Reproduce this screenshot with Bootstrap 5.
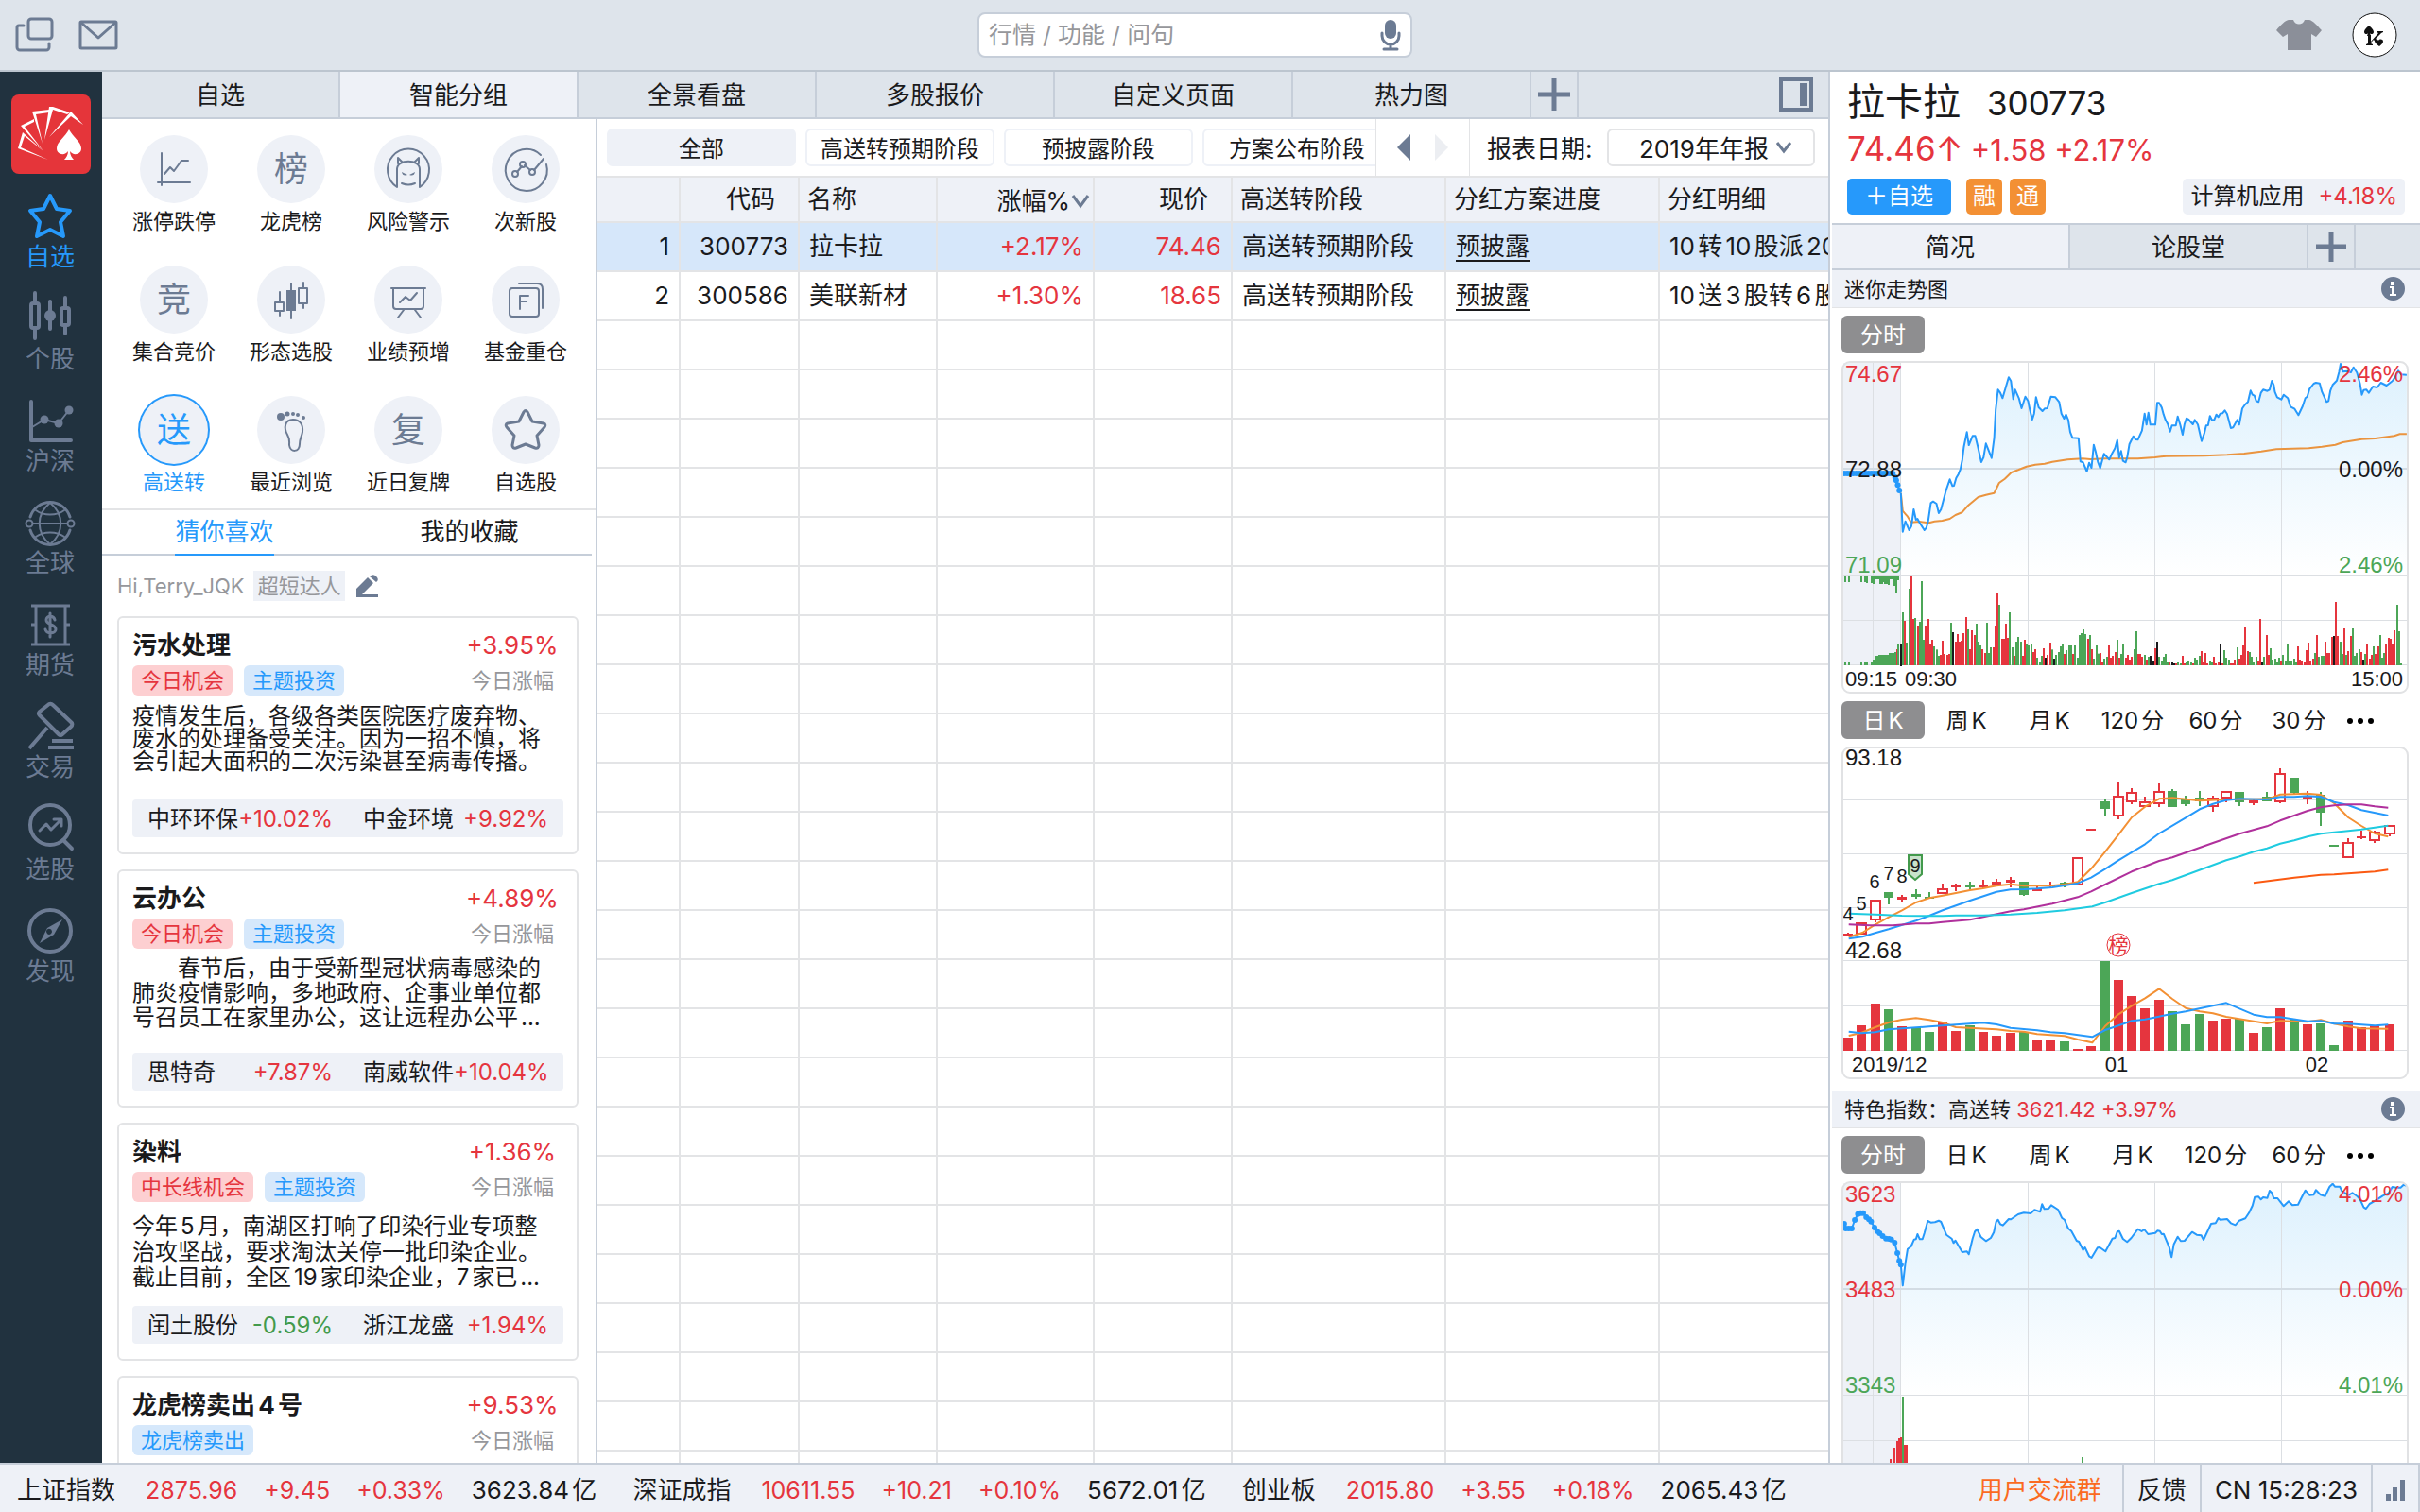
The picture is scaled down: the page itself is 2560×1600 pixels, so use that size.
<!DOCTYPE html>
<html lang="zh-CN">
<head>
<meta charset="utf-8">
<meta name="viewport" content="width=device-width, initial-scale=1">
<title>智能分组</title>
<link href="https://cdn.jsdelivr.net/npm/bootstrap@5.3.0/dist/css/bootstrap.min.css" rel="stylesheet">
<style>
:root{--line:#c6ced9;--soft:#e3e4e6;--bar:#dee4eb;--pale:#eef1f7;--slate:#6c7b93;--navy:#21323f;--blue:#2699fb;--up:#e5353e;--down:#439a4c;--ink:#1a1a1c;--mute:#96979b}
body{font-family:Inter,"Noto Sans CJK SC",sans-serif;color:var(--ink);font-size:26px;line-height:32px;text-autospace:normal;background:#fff}
button,input,select{font-family:inherit;color:inherit;text-autospace:inherit}
button{border:0;background:none;padding:0}
a{color:inherit;text-decoration:none}
svg{display:block}
.up{color:var(--up)}.down{color:var(--down)}.blue{color:var(--blue)}.mute{color:var(--mute)}.slate{color:var(--slate)}
.snug{text-autospace:no-autospace}
.ico{fill:none;stroke:currentColor;stroke-width:2;stroke-linecap:round;stroke-linejoin:round}
.ico.bold{stroke-width:3}
.ico .solid{fill:currentColor;stroke:none}

.topbar{height:76px;background:var(--bar);border-bottom:2px solid #bcc5cf;display:grid;grid-template-columns:calc(50% - 246px) 460px 1fr;align-items:center}
.searchbox{height:48px;background:#fff;border:2px solid var(--line);border-radius:8px;padding:0 10px}
.searchbox input{border:0;outline:0;background:none;font-size:25px;line-height:32px;padding:0}
.searchbox input::placeholder{color:var(--mute);opacity:1}

.rail{width:108px;background:var(--navy);padding-top:24px}
.rail .logo{width:84px;height:84px;margin:0 auto 16px}
.rail a{display:flex;flex-direction:column;align-items:center;height:108px;padding-right:2px;color:var(--slate)}
.rail a.active{color:var(--blue)}

.tabstrip{height:50px;background:var(--bar);border-bottom:2px solid var(--line)}
.tabstrip button{width:252px;border-right:2px solid var(--line);height:48px;padding-top:2px}
.tabstrip button.active{background:var(--pale)}
.tabstrip button.plus{width:50px;padding:0}

.leftpane{width:524px;border-right:2px solid var(--line)}
.groups{display:grid;grid-template-columns:repeat(4,124px);justify-content:center;padding:17px 0 0 2px;height:414px;border-bottom:2px solid var(--soft)}
.groups button{height:138px;font-size:22px;display:flex;flex-direction:column;align-items:center}
.groups .disc{width:72px;height:72px;border-radius:50%;background:var(--pale);color:var(--slate);font-size:36px;display:flex;align-items:center;justify-content:center;margin-bottom:3px}
.groups .active{color:var(--blue)}
.groups .active .disc{color:var(--blue);box-shadow:0 0 0 2px var(--blue)}
.subtabs{height:48px;border-bottom:2px solid var(--line)}
.subtabs button{height:48px;border-bottom:2px solid transparent}
.subtabs .active{color:var(--blue);border-color:var(--blue)}
.greet{font-size:22px;padding:16px}
.greet .persona{background:var(--pale);padding:0 4px 0 5px;margin:0 12px 0 9px}
.theme{border:2px solid var(--soft);border-radius:6px;height:252px;padding:13px 14px 0;margin:0 18px 16px 16px}
.theme h2{font-size:26px;line-height:32px;font-weight:700;margin:0}
.theme .pct{width:108px;text-align:center}
.theme .tagrow{font-size:22px;margin-top:5px}
.tag{border-radius:6px;padding:0 9px;margin-right:12px}
.tag-red{background:#fdcfd1;color:var(--up)}
.tag-blue{background:#d6e8fb;color:var(--blue)}
.theme p{font-size:24px;line-height:26px;height:110px;padding:8px 8px 0 0;margin:0}
.theme p.tight{line-height:24px;padding-top:10px}
.theme p.airy{line-height:27px;padding-top:12px}
.pair{background:var(--pale);border-radius:4px;height:40px;font-size:24px}
.pair>div{width:50%;padding:2px 16px 0;display:flex;justify-content:space-between;align-items:center;white-space:nowrap}

.filters{height:62px;border-bottom:2px solid var(--soft)}
.pills{padding-left:10px;gap:10px}
.pills button{flex:0 0 200px;height:40px;border:2px solid var(--pale);border-radius:6px;font-size:24px;white-space:nowrap;padding-top:4px}
.pills .active{background:var(--pale)}
.pager{width:100px;border:1px solid var(--soft);border-width:0 1px;gap:26px}
.period{width:379px;padding:0 14px 0 18px}
.period label{padding-top:4px}
.period select{width:220px;height:40px;border:2px solid var(--soft);border-radius:6px;font-size:26px;line-height:32px;padding:4px 0 0 32px;background-color:#fff;background-position:right 22px center;background-size:18px 14px;color:var(--ink);background-image:url("data:image/svg+xml,%3csvg xmlns='http://www.w3.org/2000/svg' viewBox='0 0 18 14'%3e%3cpath fill='none' stroke='%236c7b93' stroke-width='3' d='M2 2l7 9 7-9'/%3e%3c/svg%3e")}
.quotes{table-layout:fixed;border-collapse:separate;border-spacing:0;margin:0;color:var(--ink)}
.quotes>:not(caption)>*>*{height:52px;padding:0 10px;border:0;border-right:2px solid var(--soft);border-bottom:2px solid var(--soft);white-space:nowrap;overflow:hidden;vertical-align:middle;background:transparent;color:inherit;box-shadow:none}
.quotes>thead>tr>th{height:48px;background:var(--pale);font-weight:400;padding:0 8px}
.quotes>*>tr>:last-child{border-right:0}
.quotes>tbody>tr>.n{text-align:right}
.quotes>thead>tr>.n{text-align:right;padding-right:24px}
.quotes>thead>tr>.sorted{padding-right:2px}
.quotes>tbody>tr.picked>td{background:#d6e7fa}
.quotes>tbody>tr>.up{color:var(--up)}
.quotes a{text-decoration:underline;text-underline-offset:5px;text-decoration-thickness:2px}

.sidepane{width:626px;border-left:2px solid var(--line);padding-left:2px}
.head{height:160px;padding:10px 16px 0}
.head .nm{font-size:40px;line-height:44px;margin-right:28px}
.head .cd,.head .px{font-size:35px;line-height:44px}
.head .chg{font-size:31px;line-height:44px}
.btn-add{background:var(--blue);color:#fff;width:110px;height:38px;border-radius:5px;font-size:24px}
.mk{background:#f39034;color:#fff;width:38px;height:38px;border-radius:5px;font-size:24px;display:flex;align-items:center;justify-content:center}
.sector{background:var(--pale);height:38px;border-radius:5px;font-size:24px;padding:0 8px;gap:15px}
.sidepane .tabstrip{border-top:2px solid var(--line)}
.sidepane .tabstrip button{height:46px}
.sect{background:var(--pale);height:40px;font-size:22px;border-bottom:1px solid var(--soft);padding:0 16px 0 13px}
.plot+.sect{margin-top:12px}
.spans{padding:8px 0 8px 10px;font-size:24px}
.spans button{width:88px;height:40px;border-radius:6px;white-space:nowrap;padding-top:2px}
.spans .active{background:#8e8e90;color:#fff}
.spans .more{width:42px}
.plot{padding:0 12px 0 10px}
.plot svg{width:100%;height:auto}
.plot text{font-family:"Liberation Sans",sans-serif;font-size:24px}
.plot .sm{font-size:22px}
.plot .seq{font-size:20px}
.plot .han{font-family:"Noto Sans CJK SC",sans-serif;font-size:21px}

.foot{height:52px;background:var(--pale);border-top:2px solid var(--line);white-space:nowrap}
.foot .idx{gap:28px;margin-left:18px;padding-top:4px}
.foot .idx+.idx{margin-left:38px}
.foot .idx .up{font-size:25px}
.foot .cell{height:50px;display:flex;align-items:center;border-right:2px solid var(--line);padding:4px 14px 0}
</style>
<script src="https://cdn.jsdelivr.net/npm/bootstrap@5.3.0/dist/js/bootstrap.bundle.min.js"></script>
</head>
<body class="vh-100 d-flex flex-column overflow-hidden">

<header class="topbar flex-shrink-0">
  <div class="d-flex align-items-center slate ps-3">
    <button aria-label="窗口"><svg class="ico bold" width="42" height="40" viewBox="0 0 42 40"><rect x="14" y="3" width="25" height="21" rx="3"/><path d="M9 10H4a2 2 0 0 0-2 2v21a3 3 0 0 0 3 3h28a3 3 0 0 0 3-3v-4"/></svg></button>
    <button class="ms-4" aria-label="邮件"><svg class="ico bold" width="44" height="36" viewBox="0 0 44 36"><rect x="3" y="4" width="38" height="28" rx="1"/><path d="M4 5l18 16L40 5"/></svg></button>
  </div>
  <div class="searchbox d-flex align-items-center">
    <input class="flex-grow-1" type="text" placeholder="行情 / 功能 / 问句" aria-label="搜索">
    <button class="slate" aria-label="语音"><svg class="ico" width="22" height="34" viewBox="0 0 22 34"><rect class="solid" x="5" y="1" width="12" height="20" rx="6"/><path d="M2 15v3a9 9 0 0 0 18 0v-3M11 27v4M4 32h14" stroke-width="3"/></svg></button>
  </div>
  <div class="d-flex align-items-center justify-content-end pe-4">
    <button class="me-4" style="color:#8b8f99" aria-label="换肤"><svg width="48" height="34" viewBox="0 0 48 34"><path fill="currentColor" d="M13 1h5c2 6 10 6 12 0h5c4 1 8 6 13 11l-6 7-5-3v17H12V16l-5 3-7-7C5 6 9 2 13 1z"/></svg></button>
    <button class="ms-2" aria-label="用户"><svg width="48" height="48" viewBox="0 0 48 48"><circle cx="24" cy="24" r="23" fill="#fff" stroke="#111"/><g fill="#111"><path d="M18 14c2 2 5 4 5 7 0 2-3 3-4 1l1 3h-4l1-3c-1 2-4 1-4-1 0-3 3-5 5-7z"/><path d="M17 24h3v7l8-9-2-1v-1h7v1l-2 1-6 6 4 5h-3l-3-4-3 3v1l2 1v1h-7v-1l2-1z"/><path d="M29 36c-3-2-5-4-5-6 0-2 3-2 4 0 1-2 5-2 5 1 0 2-2 3-4 5z"/></g></svg></button>
  </div>
</header>

<div class="d-flex flex-grow-1 overflow-hidden">
  <nav class="rail flex-shrink-0">
    <svg class="logo" viewBox="0 0 84 84"><rect width="84" height="84" rx="8" fill="#e5353a"/><g fill="#fff"><path d="M39 69L7 57l5-17 22 20-20-16-4 12z"/><path d="M34 60L10 33l14-7v3l-10 5z"/><path d="M33 52L22 18l18-2v3l-14 2z"/><path d="M35 48l5-35 4 0 18 6-3 2-15-5z"/><path d="M40 45l23-27 13 14-13-9z"/><path d="M61 37c4 8 13 13 13 20 0 7-9 8-12 3 0 4 2 7 4 9H56c2-2 4-5 4-9-3 5-12 4-12-3 0-7 9-12 13-20z"/></g></svg>
    <a class="active" href="#"><svg class="ico" width="54" height="56" viewBox="0 0 54 56"><path stroke-width="4" stroke-linejoin="round" d="M27 7l7 14 14 2-10 12 3 15-14-7-14 7 3-15L6 23l14-2z"/></svg>自选</a>
    <a href="#"><svg class="ico" width="54" height="56" viewBox="0 0 54 56" ><g stroke-width="4"><rect x="7" y="13" width="8" height="26" rx="2"/><path d="M11 2v11M11 39v11M27 11v29M43 7v11M43 36v9"/><rect x="39" y="18" width="8" height="18" rx="2"/></g><circle class="solid" cx="27" cy="26" r="6"/></svg>个股</a>
    <a href="#"><svg class="ico" width="54" height="56" viewBox="0 0 54 56"><path stroke-width="4" d="M7 9v41h42"/><path d="M8 36l13-8 15 4 11-14"/><circle class="solid" cx="21" cy="28" r="4.500"/><circle class="solid" cx="36" cy="32" r="4.500"/><circle class="solid" cx="47" cy="18" r="4.500"/></svg>沪深</a>
    <a href="#"><svg class="ico" width="54" height="56" viewBox="0 0 54 56"><path stroke-width="3" d="M6 23a22 22 0 0 1 42 0M6 37a22 22 0 0 0 42 0"/><path d="M9 30h36M27 8c-15 12-15 32 0 44M27 8c15 12 15 32 0 44M12 16c8 6 22 6 30 0M12 44c8-6 22-6 30 0"/><circle cx="5" cy="30" r="3.500"/><circle cx="49" cy="30" r="3.500"/></svg>全球</a>
    <a href="#"><svg class="ico" width="54" height="56" viewBox="0 0 54 56"><path stroke-width="3" stroke-linecap="butt" d="M7 9h41M7 50h41M12 9v41M43 9v41M7 29h5M43 29h5"/><path stroke-width="3" d="M32 24c-1-5-9-5-9 0 0 6 10 4 10 10 0 5-10 5-11 0M27 17v25"/></svg>期货</a>
    <a href="#"><svg class="ico" width="54" height="56" viewBox="0 0 54 56"><path stroke-width="4" stroke-linecap="butt" d="M26 5q2-1 4 1l20 19q1 2-1 4l-9 8q-2 2-4 0L16 17q-2-2 0-4zM24 30L5 52M29 44h22M25 51h27"/></svg>交易</a>
    <a href="#"><svg class="ico" width="54" height="56" viewBox="0 0 54 56"><circle cx="27" cy="25" r="21" stroke-width="4"/><path stroke-width="4" d="M41 41l9 9"/><path stroke-width="3" d="M16 31l7-7 5 6 10-10M31 19h8v7"/></svg>选股</a>
    <a href="#"><svg class="ico" width="54" height="56" viewBox="0 0 54 56"><circle cx="27" cy="29" r="22" stroke-width="4"/><path class="solid" fill-rule="evenodd" d="M40 17l-9 16-15 9 8-16zM27 27a3 3 0 1 0 1 5 3 3 0 0 0-1-5z"/></svg>发现</a>
  </nav>

  <main class="flex-grow-1 d-flex flex-column overflow-hidden">
    <div class="tabstrip d-flex flex-shrink-0">
      <button>自选</button><button class="active">智能分组</button><button>全景看盘</button><button>多股报价</button><button>自定义页面</button><button>热力图</button>
      <button class="plus slate d-flex align-items-center justify-content-center" aria-label="新增"><svg width="34" height="34"><path d="M17 0v34M0 17h34" stroke="currentColor" stroke-width="5"/></svg></button>
      <span class="ms-auto me-3 d-flex align-items-center slate"><svg width="36" height="36"><path fill="none" stroke="currentColor" stroke-width="4" d="M2 2h32v32H2z"/><path fill="currentColor" d="M22 6h8v24h-8z"/></svg></span>
    </div>
    <div class="d-flex flex-grow-1 overflow-hidden">
      <section class="leftpane flex-shrink-0 overflow-hidden">
        <div class="groups">
          <button><span class="disc"><svg class="ico" width="72" height="72"><path d="M23 19v34M19 50h34M26 41l6-7 4 4 8-11h7"/></svg></span>涨停跌停</button>
          <button><span class="disc">榜</span>龙虎榜</button>
          <button><span class="disc"><svg class="ico" width="72" height="72"><path d="M24 55a22 22 0 1 1 24 0V36c0-11-24-11-24 0zM25 30v-6l5 5M47 30v-6l-5 5M29 51q7 3 14 0"/><path class="solid" d="M29 39l6 3q-5 2-6-3zM43 39l-6 3q5 2 6-3z"/></svg></span>风险警示</button>
          <button><span class="disc"><svg class="ico" width="72" height="72"><path d="M52 21a22 22 0 1 0 6 10M27 39l5-6M35 32l6 5M45 37l10-12"/><circle cx="25" cy="41" r="3"/><circle cx="33" cy="31" r="3"/><circle cx="43" cy="39" r="3"/></svg></span>次新股</button>
          <button><span class="disc">竞</span>集合竞价</button>
          <button><span class="disc"><svg class="ico" width="72" height="72"><path d="M19 39h9v9h-9zM24 28v11M24 48v5M36 19v37M44 24h9v16h-9zM49 18v6M49 40v5"/><path class="solid" d="M31 26h10v22H31z"/></svg></span>形态选股</button>
          <button><span class="disc"><svg class="ico" width="72" height="72"><path d="M18 24h36M20 24v19q0 3 3 3h26q3 0 3-3V24M27 39l6-6 5 4 7-8M31 47l-6 8M43 47l6 8"/></svg></span>业绩预增</button>
          <button><span class="disc"><svg class="ico" width="72" height="72"><rect x="19" y="24" width="31" height="30" rx="3"/><path d="M29 19h19q6 0 6 6v20M30 46V32h9M30 38h7"/></svg></span>基金重仓</button>
          <button class="active"><span class="disc">送</span>高送转</button>
          <button><span class="disc"><svg class="ico" width="72" height="72"><circle class="solid" cx="25" cy="22" r="4"/><circle class="solid" cx="32" cy="19" r="2.500"/><circle class="solid" cx="38" cy="19" r="2"/><circle class="solid" cx="43" cy="20" r="2"/><circle class="solid" cx="49" cy="23" r="2"/><path d="M38 25c7 0 11 5 10 13-1 6-3 7-3 13 0 9-10 9-11 1 0-5 1-6-2-11-4-7-3-16 6-16z"/></svg></span>最近浏览</button>
          <button><span class="disc">复</span>近日复牌</button>
          <button><span class="disc"><svg class="ico" width="72" height="72"><path stroke-width="3" d="M34 17q2-3 4 0l5 10 12 2q3 1 1 4l-8 9 2 10q0 4-4 3l-10-4-10 4q-4 1-4-3l2-10-8-9q-2-3 1-4l12-2z"/></svg></span>自选股</button>
        </div>
        <div class="subtabs d-flex me-1"><div class="w-50 text-center"><button class="active">猜你喜欢</button></div><div class="w-50 text-center"><button>我的收藏</button></div></div>
        <div class="greet d-flex align-items-center mute">Hi,Terry_JQK<span class="persona">超短达人</span><button class="slate" aria-label="编辑"><svg width="24" height="24"><path fill="currentColor" d="M0 24v-9L12 3l6 6L6 21h17v3zM14 2q3-3 6-1l2 2q2 3-1 5z"/></svg></button></div>

        <article class="theme">
          <div class="d-flex justify-content-between"><h2>污水处理</h2><span class="pct up">+3.95%</span></div>
          <div class="tagrow d-flex"><span class="tag tag-red">今日机会</span><span class="tag tag-blue">主题投资</span><span class="pct mute ms-auto">今日涨幅</span></div>
          <p class="tight">疫情发生后，各级各类医院医疗废弃物、废水的处理备受关注。因为一招不慎，将会引起大面积的二次污染甚至病毒传播。</p>
          <div class="pair d-flex"><div>中环环保<span class="up">+10.02%</span></div><div>中金环境<span class="up">+9.92%</span></div></div>
        </article>
        <article class="theme">
          <div class="d-flex justify-content-between"><h2>云办公</h2><span class="pct up">+4.89%</span></div>
          <div class="tagrow d-flex"><span class="tag tag-red">今日机会</span><span class="tag tag-blue">主题投资</span><span class="pct mute ms-auto">今日涨幅</span></div>
          <p>　　春节后，由于受新型冠状病毒感染的肺炎疫情影响，多地政府、企事业单位都号召员工在家里办公，这让远程办公平...</p>
          <div class="pair d-flex"><div>思特奇<span class="up">+7.87%</span></div><div>南威软件<span class="up">+10.04%</span></div></div>
        </article>
        <article class="theme">
          <div class="d-flex justify-content-between"><h2>染料</h2><span class="pct up">+1.36%</span></div>
          <div class="tagrow d-flex"><span class="tag tag-red">中长线机会</span><span class="tag tag-blue">主题投资</span><span class="pct mute ms-auto">今日涨幅</span></div>
          <p class="airy">今年5月，南湖区打响了印染行业专项整治攻坚战，要求淘汰关停一批印染企业。截止目前，全区19家印染企业，7家已...</p>
          <div class="pair d-flex"><div>闰土股份<span class="down">-0.59%</span></div><div>浙江龙盛<span class="up">+1.94%</span></div></div>
        </article>
        <article class="theme">
          <div class="d-flex justify-content-between"><h2>龙虎榜卖出4号</h2><span class="pct up">+9.53%</span></div>
          <div class="tagrow d-flex"><span class="tag tag-blue">龙虎榜卖出</span><span class="pct mute ms-auto">今日涨幅</span></div>
        </article>
      </section>

      <section class="flex-grow-1 overflow-hidden">
        <div class="filters d-flex">
          <div class="pills d-flex align-items-center flex-grow-1 overflow-hidden">
            <button class="active">全部</button><button>高送转预期阶段</button><button>预披露阶段</button><button>方案公布阶段</button>
          </div>
          <div class="pager flex-shrink-0 d-flex align-items-center justify-content-center">
            <button class="slate" aria-label="上一页"><svg width="14" height="28"><path fill="currentColor" d="M14 0v28L0 14z"/></svg></button>
            <button aria-label="下一页"><svg width="14" height="28"><path fill="#eceef2" d="M0 0v28l14-14z"/></svg></button>
          </div>
          <div class="period snug flex-shrink-0 d-flex align-items-center justify-content-between">
            <label for="period">报表日期:</label>
            <select class="form-select" id="period"><option>2019年年报</option></select>
          </div>
        </div>
        <table class="table quotes">
          <colgroup><col style="width:88px"><col style="width:126px"><col style="width:146px"><col style="width:166px"><col style="width:146px"><col style="width:226px"><col style="width:226px"><col></colgroup>
          <thead><tr><th></th><th class="n">代码</th><th>名称</th><th class="n sorted snug"><span class="d-flex align-items-center justify-content-end pt-1">涨幅%<svg class="slate" width="22" height="16"><path d="M3 2l8 11 8-11" fill="none" stroke="currentColor" stroke-width="3"/></svg></span></th><th class="n">现价</th><th>高送转阶段</th><th>分红方案进度</th><th>分红明细</th></tr></thead>
          <tbody id="rows">
            <tr class="picked"><td class="n">1</td><td class="n">300773</td><td>拉卡拉</td><td class="n up">+2.17%</td><td class="n up">74.46</td><td>高送转预期阶段</td><td><a href="#">预披露</a></td><td>10转10股派20</td></tr>
            <tr><td class="n">2</td><td class="n">300586</td><td>美联新材</td><td class="n up">+1.30%</td><td class="n up">18.65</td><td>高送转预期阶段</td><td><a href="#">预披露</a></td><td>10送3股转6股</td></tr>
          </tbody>
        </table>
      </section>
    </div>
  </main>

  <aside class="sidepane flex-shrink-0 overflow-hidden">
    <div class="head">
      <div class="d-flex align-items-baseline"><span class="nm">拉卡拉</span><span class="cd">300773</span></div>
      <div class="d-flex align-items-baseline up gap-2 mt-1"><span class="px">74.46↑</span><span class="chg">+1.58 +2.17%</span></div>
      <div class="d-flex align-items-center mt-2">
        <button class="btn-add me-3">＋自选</button><span class="mk me-2">融</span><span class="mk">通</span>
        <span class="sector ms-auto d-flex align-items-center">计算机应用<span class="up">+4.18%</span></span>
      </div>
    </div>
    <div class="tabstrip d-flex"><button class="active">简况</button><button>论股堂</button><button class="plus slate d-flex align-items-center justify-content-center" aria-label="新增"><svg width="32" height="32"><path d="M16 0v32M0 16h32" stroke="currentColor" stroke-width="5"/></svg></button></div>
    <div class="sect d-flex align-items-center justify-content-between">迷你走势图<svg class="slate" width="25" height="25" viewBox="0 0 25 25"><circle cx="12.500" cy="12.500" r="12.500" fill="currentColor"/><path fill="#fff" d="M10 5h4v4h-4zM9 10h5v8h2v2H9v-2h2v-6H9z"/></svg></div>
    <div class="spans d-flex"><button class="active">分时</button></div>
    <div class="plot"><svg id="mini" viewBox="0 0 600 352"></svg></div>
    <div class="spans d-flex"><button class="active">日K</button><button>周K</button><button>月K</button><button>120分</button><button>60分</button><button>30分</button><button class="more d-flex align-items-center justify-content-center" aria-label="更多"><svg width="30" height="8"><circle cx="4" cy="4" r="3"/><circle cx="15" cy="4" r="3"/><circle cx="26" cy="4" r="3"/></svg></button></div>
    <div class="plot"><svg id="daily" viewBox="0 0 600 352"></svg></div>
    <div class="sect d-flex align-items-center"><span class="flex-grow-1">特色指数：高送转 <span class="up">3621.42 +3.97%</span></span><svg class="slate" width="25" height="25" viewBox="0 0 25 25"><circle cx="12.500" cy="12.500" r="12.500" fill="currentColor"/><path fill="#fff" d="M10 5h4v4h-4zM9 10h5v8h2v2H9v-2h2v-6H9z"/></svg></div>
    <div class="spans d-flex"><button class="active">分时</button><button>日K</button><button>周K</button><button>月K</button><button>120分</button><button>60分</button><button class="more d-flex align-items-center justify-content-center" aria-label="更多"><svg width="30" height="8"><circle cx="4" cy="4" r="3"/><circle cx="15" cy="4" r="3"/><circle cx="26" cy="4" r="3"/></svg></button></div>
    <div class="plot"><svg id="theme" viewBox="0 0 600 352"></svg></div>
  </aside>
</div>

<footer class="foot d-flex align-items-center flex-shrink-0">
  <div class="idx d-flex"><span class="me-1">上证指数</span><span class="up">2875.96</span><span class="up">+9.45</span><span class="up">+0.33%</span><span>3623.84亿</span></div>
  <div class="idx d-flex"><span class="me-1">深证成指</span><span class="up">10611.55</span><span class="up">+10.21</span><span class="up">+0.10%</span><span>5672.01亿</span></div>
  <div class="idx d-flex"><span class="me-1">创业板</span><span class="up">2015.80</span><span class="up">+3.55</span><span class="up">+0.18%</span><span>2065.43亿</span></div>
  <a class="cell ms-auto" href="#" style="color:#fb6a21;padding-right:22px">用户交流群</a>
  <a class="cell" href="#">反馈</a>
  <span class="cell">CN 15:28:23</span>
  <span class="cell slate"><svg width="20" height="22"><path fill="currentColor" d="M0 15h5v7H0zM7 8h5v14H7zM15 0h5v22h-5z"/></svg></span>
</footer>

<script>
// empty rows that carry the table's ruling down to the footer
const body = document.getElementById('rows');
for (let i = 0; i < 26; i++) body.insertAdjacentHTML('beforeend', '<tr>' + '<td></td>'.repeat(8) + '</tr>');

const RED = '#e5353e', GREEN = '#4ca657', INK = '#1a1a1c', BLUE = '#2699fb', GRID = '#e1e2e4';
const KX = 630 / 1568;
const px = x => +(x * KX - 18).toFixed(1);
const scale = off => pts => pts.trim().split(/\s+/).map(p => { const [x, y] = p.split(',').map(Number); return px(x) + ',' + (y / 3 - off).toFixed(1); });
const rect = (x, y, w, h, c) => `<rect x="${x}" y="${y}" width="${w}" height="${h}" fill="${c}"/>`;
const text = (x, y, s, c, o = '') => `<text x="${x}" y="${y}" fill="${c}" ${o}>${s}</text>`;
const line = (pts, c, w = 2) => `<polyline points="${pts.join(' ')}" fill="none" stroke="${c}" stroke-width="${w}" stroke-linejoin="round"/>`;
const frame = `<rect x="1" y="1" width="598" height="350" rx="8" fill="none" stroke="${GRID}" stroke-width="2"/>`;
const END = 'text-anchor="end"';

function intraday(id, pre, pts, avg, labels) {
  let s = `<defs><linearGradient id="g${id}" x1="0" y1="0" x2="0" y2="1"><stop offset="0" stop-color="#d9effd"/><stop offset="1" stop-color="#fff"/></linearGradient></defs>`;
  s += rect(2, 2, 60, 320, '#eef1f7');
  s += `<polygon points="62,227 ${pts.join(' ')} 598,227" fill="url(#g${id})" fill-opacity=".9"/>`;
  for (const x of [33, 62, 197, 331, 465]) s += rect(x, 2, 1, 320, '#dcdfe3');
  s += rect(2, 113, 596, 2, '#d3dce4') + rect(2, 226, 596, 1, '#dcdfe3') + rect(2, 274, 596, 1, '#dcdfe3') + rect(2, 321, 596, 1, '#dcdfe3');
  if (avg) s += line(avg, '#ea943f');
  s += line(pre, BLUE) + line(pts, BLUE);
  pre.forEach(p => { const [x, y] = p.split(','); s += `<circle cx="${x}" cy="${y}" r="3" fill="${BLUE}"/>`; });
  const [hi, mid, lo, pct, c] = labels;
  s += text(4, 22, hi, RED) + text(4, 123, mid, c) + text(4, 224, lo, GREEN);
  s += text(594, 22, pct, RED, END) + text(594, 123, '0.00%', c, END) + text(594, 224, pct, GREEN, END);
  return s;
}
const C = { g: GREEN, r: RED, k: INK };

// stock, minute line
const a = scale(12);
const stock = a(`201,455 206,578 213,545 223,573 229,560 235,507 241,540 245,537 250,548 263,573 268,566 273,545 280,487 286,482 295,489 301,519 307,507 320,447 330,412 337,433 341,432 347,407 353,395 358,380 363,350 367,308 375,262 380,303 390,274 397,274 404,308 413,357 419,342 425,298 440,344 447,280 451,190 457,127 463,137 469,154 485,88 491,100 497,157 502,127 512,154 519,186 529,149 536,163 541,192 547,222 552,203 557,151 564,183 574,195 580,187 587,186 596,149 608,151 618,166 624,203 631,219 636,206 642,223 647,262 653,280 669,281 674,355 681,358 691,387 697,359 703,375 709,302 714,324 720,357 726,376 736,331 750,349 757,330 765,313 771,287 776,343 781,322 786,353 793,358 797,343 803,300 813,275 819,285 825,286 836,257 843,203 848,238 853,200 858,238 871,238 876,169 881,169 888,184 893,206 898,223 904,236 910,260 915,241 925,241 930,212 937,240 943,270 948,236 953,218 959,222 970,237 975,223 983,238 993,290 1000,266 1005,241 1010,240 1015,211 1020,223 1026,224 1032,206 1037,214 1042,203 1048,202 1054,193 1060,204 1070,249 1076,247 1087,223 1092,238 1100,187 1107,175 1115,166 1122,130 1127,143 1132,146 1137,163 1143,166 1149,137 1155,127 1166,131 1172,127 1178,99 1183,112 1186,134 1192,151 1203,158 1209,143 1220,154 1227,181 1238,188 1248,208 1259,180 1266,154 1271,149 1277,125 1288,108 1294,105 1304,107 1310,134 1322,166 1327,163 1332,130 1338,112 1349,98 1355,71 1359,45 1365,70 1377,68 1386,72 1393,56 1402,73 1410,107 1415,143 1420,128 1427,127 1433,137 1444,117 1455,120 1465,105 1480,114 1495,100 1503,86 1511,67 1519,79 1533,80`);
const mean = a(`201,455 206,512 214,523 219,530 228,548 250,546 275,550 290,545 310,543 330,537 345,525 362,517 378,495 405,468 425,461 447,455 460,423 475,410 492,390 510,382 532,371 555,365 580,362 600,356 640,349 680,346 700,348 740,346 825,346 870,342 900,338 1000,337 1060,334 1105,330 1150,323 1190,316 1275,313 1310,308 1345,302 1365,294 1415,284 1450,282 1500,274 1515,268 1533,268`);
const preStock = a('52,393 60,393 68,393 76,393 84,393 92,393 100,393 108,393 116,393 124,393 132,393 140,393 148,393 156,393 164,393 172,393 180,393 186,405 189,415 193,430 197,447');
let m = intraday('a', preStock, stock, mean, ['74.67', '72.88', '71.09', '2.46%', INK]);
const tops = `g144 r171 g240 g69 r30 r165 g162 r186 g174 g45 g231 r186 r165 r243 r231 g252 g262 g282 r279 r234 r276 r279 r276 g177 k207 r237 r213 r237 r234 r210 r159 g198 r261 r201 r216 g180 g237 g249 r261 r273 g177 g273 g255 r255 r186 r81 g120 r228 r228 r180 r225 g144 g255 r282 g237 g222 g237 r282 r231 g243 g249 g243 r270 r261 g288 g300 g282 r258 k288 r279 r240 g262 k291 g279 g270 g252 g243 r276 g264 g249 g249 r276 g249 g288 g216 g210 g198 g213 r228 g216 r261 g291 g249 g275 r273 r300 g291 g285 r249 r288 r282 r270 g231 r288 g276 g246 r288 r279 r294 r285 g261 g204 r276 r276 r285 g279 r294 g285 k282 k297 r258 k237 g285 g297 g285 g276 g300 r300 k303 k306 r306 g303 g306 r282 r306 g303 g297 g300 r306 g288 g294 g282 r267 r303 r273 r306 g297 g300 r285 r306 r300 k243 r306 g264 g288 g294 r306 r306 r294 g255 r291 r279 r249 r189 r267 g270 g285 g303 g285 r297 r165 k300 g285 r216 r279 g258 g294 g291 g300 g288 r297 g279 g297 g243 g297 g297 g291 g300 r252 r294 r297 r303 r264 r240 r297 r291 g273 r216 g285 g282 g282 r237 r273 r273 r222 k219 r111 r219 g237 g276 r195 g279 r267 r219 g195 g282 g273 g261 r270 k294 g276 r243 r291 r279 g252 r276 r252 g216 g288 g273 r246 r225 r228 r243 r201 g120 g204 g306`.split(' ');
tops.forEach((t, i) => { const h = (312 - t.slice(1)) / 3; m += rect(64 + Math.round(527 * i / (tops.length - 1)), 322 - h, 2, h, C[t[0]]); });
[[3,4],[7,4],[20,4],[24,4],[26,4],[31,4],[33,6],[35,10],[37,10],[39,11],[41,11],[43,11],[45,11],[47,11],[49,11],[50,13],[52,13],[54,13],[56,14]].forEach(([x, h]) => m += rect(x, 322 - h, 2, h, GREEN));
m += rect(58, 305, 1, 17, RED) + rect(59, 300, 2, 22, GREEN) + rect(62, 300, 2, 23, INK);
[[3,6],[7,6],[20,6],[24,6],[26,7],[31,7],[33,8],[35,3],[37,3],[39,3],[40,8],[42,8],[44,6],[45,8],[47,8],[49,9],[50,3],[52,3],[54,3],[55,10],[57,17],[59,4]].forEach(([x, h]) => m += rect(x, 228, 2, h, GREEN));
m += text(4, 344, '09:15', INK, 'class="sm"') + text(67, 344, '09:30', INK, 'class="sm"') + text(594, 344, '15:00', INK, 'class="sm" ' + END) + frame;
document.getElementById('mini').innerHTML = m;

// daily candles: x, colour, high, body top, body bottom, low, volume top
const b = scale(60);
const days = [[62,'r',772,774,782,782,1104],[97,'r',740,742,773,773,1065],[134,'r',668,669,730,738,996],[169,'g',643,643,661,680,1014],[204,'r',651,656,667,674,1068],[241,'g',633,649,658,662,1072],[276,'g',642,657,661,661,1086],[311,'r',616,632,645,645,1053],[346,'r',616,620,628,638,1083],[383,'g',609,621,626,636,1065],[418,'r',604,617,628,630,1086],[453,'r',600,610,618,620,1098],[490,'r',595,604,613,628,1089],[525,'g',609,609,650,653,1086],[560,'r',624,630,638,638,1110],[595,'r',609,618,624,628,1110],[632,'g',609,612,622,628,1116],[667,'r',534,535,618,618,1140],[702,'r',442,442,446,446,1131],[739,'g',346,354,377,398,861],[774,'r',295,339,399,410,921],[809,'r',312,328,354,364,972],[844,'r',340,358,370,372,1011],[881,'r',297,323,360,371,984],[916,'g',315,321,371,371,1020],[951,'g',337,345,362,368,1062],[988,'g',321,343,355,368,1029],[1023,'r',337,344,370,386,1050],[1058,'r',322,324,342,356,1044],[1093,'g',324,324,358,368,1045],[1130,'r',348,352,359,365,1089],[1165,'g',324,340,355,355,1071],[1200,'r',249,267,355,361,1011],[1237,'g',279,279,326,330,1048],[1272,'r',321,340,345,362,1062],[1307,'g',325,333,391,432,1059],[1342,'g',492,492,496,496,1128],[1379,'r',472,487,531,531,1050],[1414,'r',446,466,472,475,1070],[1449,'r',446,452,477,485,1066],[1487,'r',430,431,457,466,1062]];
let d = '';
for (const y of [56, 113, 170, 226, 274, 321]) d += rect(2, y, 596, 1, '#dcdfe3');
days.forEach(([x, c, hi, t, l, lo, v]) => {
  const X = Math.round(px(x)), Y = n => Math.round(n / 3 - 60), h = Math.max(1, Y(l) - Y(t));
  const x0 = Math.max(2, X - 5);
  d += rect(X - 1, Y(hi), 2, Y(lo) - Y(hi), C[c]);
  d += c === 'r' && h > 3 ? `<rect x="${x0}" y="${Y(t)}" width="${X + 5 - x0}" height="${h}" fill="#fff" stroke="${RED}" stroke-width="2"/>` : rect(X - 5, Y(t), 10, Math.max(2, h), C[c]);
  d += rect(x0, Y(v), X + 5 - x0, 322 - Y(v), C[c]);
});
d += line(b('64,785 100,771 134,745 169,722 204,700 241,675 276,661 311,653 346,645 383,636 418,630 453,622 490,617 525,622 595,622 632,618 667,610 702,568 739,514 774,460 809,405 844,371 881,346 916,343 988,352 1058,348 1130,347 1170,346 1200,332 1270,329 1307,333 1342,360 1379,405 1414,432 1449,456 1484,466'), '#f39034');
d += line(b('64,790 100,784 134,772 169,760 241,733 276,717 311,700 383,669 453,641 490,634 525,633 560,631 600,627 632,621 667,614 702,596 739,569 774,541 844,490 881,456 951,406 988,379 1023,362 1058,350 1093,346 1165,348 1200,340 1237,340 1272,337 1307,340 1342,356 1379,366 1414,382 1484,399'), BLUE);
d += line(b('64,745 120,748 180,748 241,742 276,742 311,737 383,730 490,703 525,697 600,679 667,658 702,640 739,618 809,577 881,543 916,532 1023,486 1093,457 1165,433 1200,415 1272,384 1307,373 1342,367 1379,364 1414,364 1449,370 1484,374'), '#b0309c');
d += line(b('64,710 134,713 204,717 311,718 346,716 418,716 490,713 560,708 632,700 705,688 739,675 809,645 881,616 916,604 1058,541 1093,529 1130,514 1165,503 1200,488 1237,478 1272,466 1307,457 1342,452 1379,448 1414,443 1484,431'), '#1fcbe0');
d += line(b('1130,613 1237,596 1272,592 1307,587 1342,586 1449,577 1484,571'), '#fb5a12');
d += line(b('64,1098 97,1089 134,1071 169,1056 204,1047 241,1042 276,1048 311,1056 346,1071 453,1078 490,1083 525,1085 560,1093 632,1099 667,1110 705,1120 739,1068 774,1030 809,1003 844,979 881,949 916,981 951,1010 988,1021 1023,1027 1058,1038 1130,1052 1165,1059 1200,1051 1272,1054 1307,1048 1342,1060 1379,1069 1414,1075 1484,1076'), '#f39034');
d += line(b('64,1085 97,1090 134,1087 169,1078 276,1069 346,1063 418,1057 453,1062 490,1073 560,1081 595,1087 632,1090 705,1102 739,1080 774,1066 809,1051 844,1046 881,1037 916,1028 951,1021 1058,994 1130,1031 1165,1039 1200,1039 1272,1052 1307,1051 1342,1060 1379,1060 1449,1066 1484,1063'), BLUE);
d += '<path d="M71 115h14v20l-7 6-7-6z" fill="#c9e2cb" stroke="#439a4c" stroke-width="2"/>';
[['4', 62, 732], ['5', 96, 698], ['6', 133, 630], ['7', 168, 604], ['8', 203, 613], ['9', 240, 578]].forEach(([s, x, y]) => d += text(Math.round(px(x)), Math.round(y / 3 - 60), s, INK, 'class="seq" text-anchor="middle"'));
d += `<circle cx="293" cy="210" r="12" fill="#fff" stroke="${RED}" stroke-width="1"/>` + text(293, 218, '榜', RED, 'class="han" text-anchor="middle"');
d += text(4, 20, '93.18', INK) + text(4, 224, '42.68', INK);
d += text(11, 344, '2019/12', INK, 'class="sm"') + text(291, 344, '01', INK, 'class="sm" text-anchor="middle"') + text(503, 344, '02', INK, 'class="sm" text-anchor="middle"') + frame;
document.getElementById('daily').innerHTML = d;

// theme index, minute line
const c = scale(110);
const idx = c(`201,595 206,661 213,590 219,545 228,537 236,515 241,514 245,498 251,514 258,514 263,495 272,456 280,461 291,460 301,455 307,459 321,500 335,512 340,526 345,518 363,555 375,553 380,562 390,512 396,490 402,482 412,507 425,520 438,510 446,492 452,459 457,452 463,466 470,470 485,450 491,451 510,435 525,430 543,432 553,421 568,427 573,403 579,418 590,417 597,406 615,420 625,446 632,452 642,480 650,488 664,519 670,522 681,548 686,540 697,568 703,573 719,541 725,540 740,553 758,512 765,510 771,490 776,488 786,513 797,523 808,510 825,482 835,489 842,483 852,498 871,494 877,487 883,488 888,498 893,497 908,540 914,571 920,530 930,506 938,520 948,519 968,491 980,500 992,502 998,516 1018,465 1030,463 1037,447 1042,452 1060,450 1070,463 1082,469 1092,455 1108,448 1118,430 1127,407 1133,380 1143,379 1149,388 1155,381 1166,383 1172,360 1178,367 1183,384 1193,384 1209,409 1222,394 1232,406 1247,404 1258,378 1266,359 1277,374 1288,373 1294,358 1306,373 1318,377 1330,347 1338,338 1344,347 1357,347 1363,362 1380,374 1390,367 1403,378 1410,387 1420,413 1426,417 1435,402 1450,392 1470,376 1485,368 1495,348 1505,350 1517,350 1525,341 1533,344`);
const preIdx = c('52,465 56,480 64,480 72,480 80,453 88,434 95,431 102,431 110,444 117,451 123,458 132,477 139,488 145,495 153,504 162,512 170,513 176,515 185,525 192,558 197,583 201,595');
let t = intraday('c', preIdx, idx, null, ['3623', '3483', '3343', '4.01%', RED]);
[[51,1212,'r'],[55,1176,'r'],[58,1155,'r'],[60,1146,'r'],[62,1143,'r'],[66,1167,'r'],[68,1167,'r'],[64,1014,'g'],[254,1206,'g']].forEach(([x, y, k]) => { const Y = Math.round(y / 3 - 110); t += rect(x, Y, 2, 322 - Y, C[k]); });
document.getElementById('theme').innerHTML = t + frame;
</script>
</body>
</html>
